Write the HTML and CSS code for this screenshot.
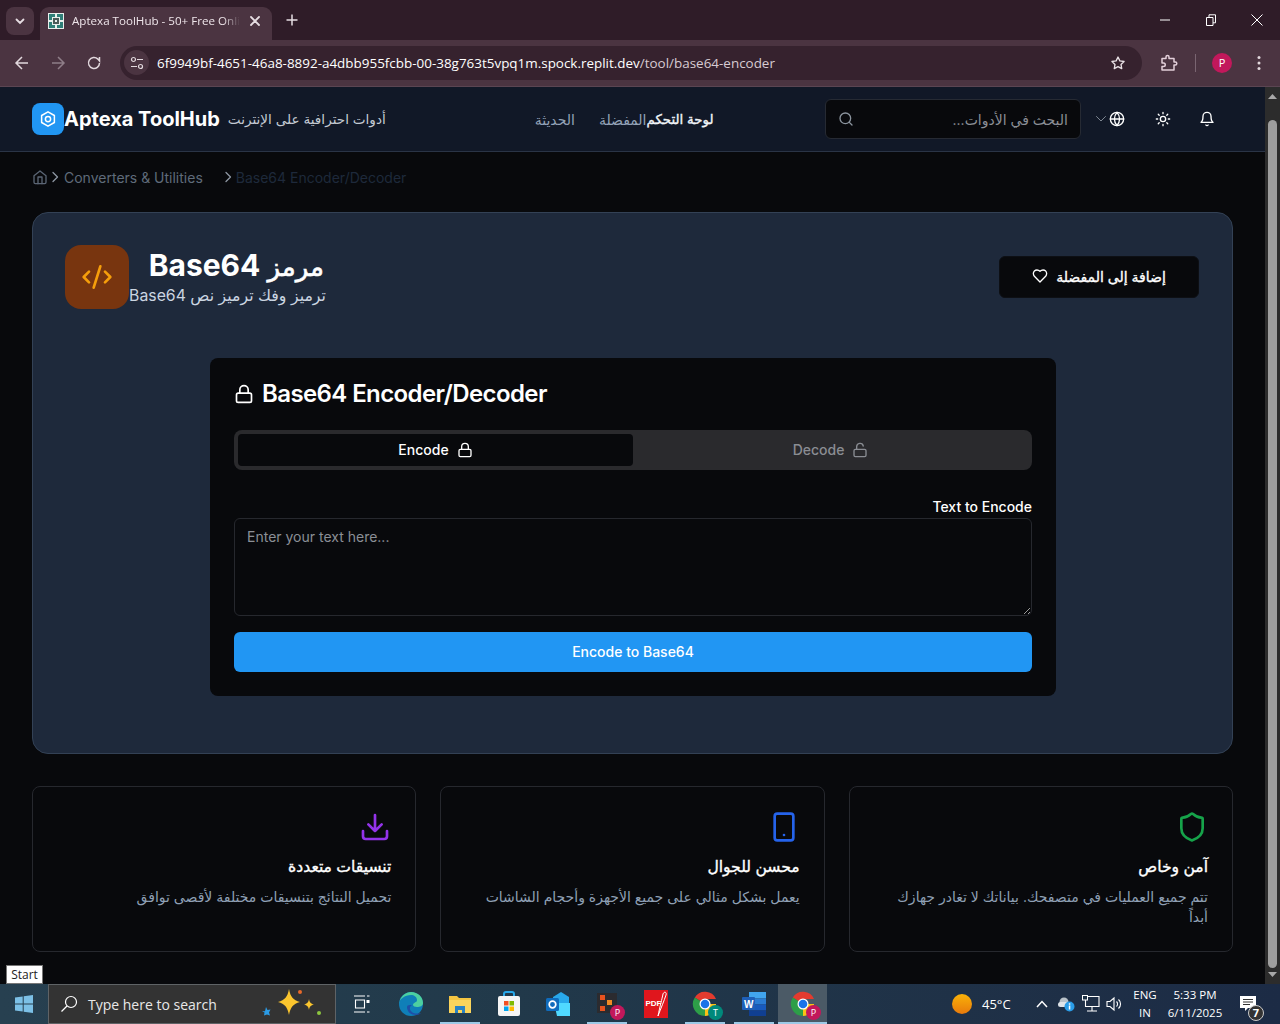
FILE: index.html
```html
<!DOCTYPE html>
<html lang="ar">
<head>
<meta charset="utf-8">
<title>Aptexa ToolHub</title>
<link rel="stylesheet" href="styles.css">
</head>
<body>
<div class="browser">
  <div class="tabbar">
    <div class="tab-search"><svg width="12" height="12" viewBox="0 0 12 12"><path d="M2.500 4.500 6 8l3.500-3.500" class="st-w2"/></svg></div>
    <div class="tab">
      <svg class="favicon" width="16" height="16" viewBox="0 0 16 16"><rect width="16" height="16" fill="#e8efec"/><path d="M1 1h6v3H4v3H1zM9 1h6v6h-3V4H9zM1 9h3v3h3v3H1zM12 9h3v6H9v-3h3z" fill="#2f7f78"/><path d="M5 5h6v6H5z" fill="#4a5a58"/><path d="M7 7h2v2H7z" fill="#e8efec"/></svg>
      <span class="tab-title">Aptexa ToolHub - 50+ Free Onli</span>
      <svg class="tab-close" width="10" height="10" viewBox="0 0 10 10"><path d="M1 1l8 8M9 1 1 9" class="st-w2"/></svg>
    </div>
    <svg class="newtab" width="12" height="12" viewBox="0 0 12 12"><path d="M6 .5v11M.5 6h11" class="st-w15"/></svg>
    <div class="win-ctrls">
      <svg width="10" height="10" viewBox="0 0 10 10"><path d="M0 5h10" class="st-w1"/></svg>
      <svg width="10" height="12" viewBox="0 0 10 12"><path d="M.5 3.500h6.500v8H.5zM3 3.500V.8h6.500v8H7" class="st-w1"/></svg>
      <svg class="win-close" width="12" height="12" viewBox="0 0 12 12"><path d="M.5.5l11 11M11.500.5l-11 11" class="st-w1"/></svg>
    </div>
  </div>
  <div class="toolbar">
    <svg class="tb-icon first" width="16" height="16" viewBox="0 0 16 16"><path d="M14 8H2.500M8 2 2 8l6 6" class="st-n15"/></svg>
    <svg class="tb-icon dim" width="16" height="16" viewBox="0 0 16 16"><path d="M2 8h11.500M8 2l6 6-6 6" class="st-d15"/></svg>
    <svg class="tb-icon" width="16" height="16" viewBox="0 0 16 16"><path d="M13.500 8a5.500 5.500 0 1 1-1.600-3.900L13.500 6V2" class="st-n15"/></svg>
    <div class="omnibox">
      <span class="site-info"><svg width="14" height="14" viewBox="0 0 14 14"><circle cx="3.500" cy="3.500" r="2" class="st-n12"/><path d="M7 3.500h6M1 10.500h6" class="st-n12"/><circle cx="10.500" cy="10.500" r="2" class="st-n12"/></svg></span>
      <span class="url">6f9949bf-4651-46a8-8892-a4dbb955fcbb-00-38g763t5vpq1m.spock.replit.dev<span class="url-path">/tool/base64-encoder</span></span>
      <svg class="star" width="16" height="16" viewBox="0 0 24 24"><path d="m12 3 2.800 5.800 6.300.9-4.600 4.400 1.100 6.300L12 17.400l-5.600 3 1.100-6.300L2.900 9.700l6.300-.9z" class="st-s"/></svg>
    </div>
    <svg class="ext" width="18" height="18" viewBox="0 0 18 18"><path d="M2 4.500h4V3a1.500 1.500 0 0 1 3 0v1.500h5V8h1.300a1.500 1.500 0 0 1 0 3H14v5H2v-3.500h1.500a1.500 1.500 0 0 0 0-3.500H2z" class="st-e"/></svg>
    <span class="tb-sep"></span>
    <span class="avatar">P</span>
    <svg class="dots" width="4" height="16" viewBox="0 0 4 16"><circle cx="2" cy="2.500" r="1.500"/><circle cx="2" cy="8" r="1.500"/><circle cx="2" cy="13.500" r="1.500"/></svg>
  </div>
</div>

<div class="viewport">
  <div class="page">
    <header class="site-header">
      <div class="brand">
        <span class="logo"><svg width="18" height="18" viewBox="0 0 24 24"><path d="M12 2.500 20.500 7.300v9.400L12 21.500 3.500 16.700V7.300z" class="st-lg"/><circle cx="12" cy="12" r="3.500" class="st-lg"/></svg></span>
        <span class="brand-name">Aptexa ToolHub</span>
        <span class="brand-sub" dir="rtl">أدوات احترافية على الإنترنت</span>
      </div>
      <nav class="nav" dir="rtl">
        <a class="nav-on">لوحة التحكم</a><a class="nav-a">المفضلة</a><a class="nav-b">الحديثة</a>
      </nav>
      <div class="header-right">
        <div class="search">
          <svg width="16" height="16" viewBox="0 0 24 24"><circle cx="11" cy="11" r="8" class="st-gr"/><path d="m21 21-4.300-4.300" class="st-gr"/></svg>
          <span class="search-ph" dir="rtl">البحث في الأدوات...</span>
        </div>
        <svg class="chev" width="12" height="12" viewBox="0 0 24 24"><path d="m3 7 9 9 9-9" class="st-gr"/></svg>
        <svg class="globe" width="16" height="16" viewBox="0 0 24 24"><circle cx="12" cy="12" r="10" class="st-wh"/><path d="M2 12h20M12 2a15 15 0 0 1 0 20a15 15 0 0 1 0-20" class="st-wh"/></svg>
        <svg class="sun" width="16" height="16" viewBox="0 0 24 24"><circle cx="12" cy="12" r="4" class="st-wh"/><path d="M12 2v2M12 20v2M4.900 4.900l1.400 1.400M17.700 17.700l1.400 1.400M2 12h2M20 12h2M6.300 17.700l-1.400 1.400M19.100 4.900l-1.400 1.400" class="st-wh"/></svg>
        <svg class="bell" width="16" height="16" viewBox="0 0 24 24"><path d="M6 8a6 6 0 0 1 12 0c0 7 3 9 3 9H3s3-2 3-9M10.300 21a2 2 0 0 0 3.400 0" class="st-wh"/></svg>
      </div>
    </header>

    <main class="main">
      <div class="crumbs">
        <svg width="16" height="16" viewBox="0 0 24 24"><path d="m3 10 9-7 9 7v10a2 2 0 0 1-2 2H5a2 2 0 0 1-2-2z" class="st-cr"/><path d="M9 22V12h6v10" class="st-cr"/></svg>
        <svg class="cr-sep" width="10" height="12" viewBox="0 0 10 12"><path d="m3 1.500 4.500 4.500L3 10.500" class="st-cr"/></svg>
        <span class="cr-link">Converters &amp; Utilities</span>
        <svg class="cr-sep2" width="10" height="12" viewBox="0 0 10 12"><path d="m3 1.500 4.500 4.500L3 10.500" class="st-cr"/></svg>
        <span class="cr-cur">Base64 Encoder/Decoder</span>
      </div>

      <section class="hero">
        <div class="hero-top">
          <div class="hero-id">
            <span class="hero-icon"><svg width="32" height="32" viewBox="0 0 24 24"><path d="m18 16 4-4-4-4M6 8l-4 4 4 4M14.500 4l-5 16" class="st-or"/></svg></span>
            <div class="hero-text" dir="rtl">
              <h1><span class="ar-h1">مرمز</span> Base64</h1>
              <p>ترميز وفك ترميز نص Base64</p>
            </div>
          </div>
          <button class="fav" dir="rtl">إضافة إلى المفضلة<svg width="16" height="16" viewBox="0 0 24 24"><path d="M19 14c1.500-1.500 3-3.200 3-5.500A5.500 5.500 0 0 0 16.500 3c-1.800 0-3 .5-4.500 2-1.500-1.500-2.700-2-4.500-2A5.500 5.500 0 0 0 2 8.500c0 2.300 1.500 4 3 5.500l7 7z" class="st-wh"/></svg></button>
        </div>

        <div class="tool">
          <h2><svg width="20" height="20" viewBox="0 0 24 24"><rect x="3" y="11" width="18" height="11" rx="2" class="st-wh"/><path d="M7 11V7a5 5 0 0 1 10 0v4" class="st-wh"/></svg>Base64 Encoder/Decoder</h2>
          <div class="tabs">
            <div class="seg seg-on">Encode<svg width="16" height="16" viewBox="0 0 24 24"><rect x="3" y="11" width="18" height="11" rx="2" class="st-wh"/><path d="M7 11V7a5 5 0 0 1 10 0v4" class="st-wh"/></svg></div>
            <div class="seg">Decode<svg width="16" height="16" viewBox="0 0 24 24"><rect x="3" y="11" width="18" height="11" rx="2" class="st-mu"/><path d="M7 11V7a5 5 0 0 1 9.900-1" class="st-mu"/></svg></div>
          </div>
          <label class="field-label" for="inp">Text to Encode</label>
          <textarea class="field" id="inp" placeholder="Enter your text here..."></textarea>
          <button class="go">Encode to Base64</button>
        </div>
      </section>

      <section class="features" dir="rtl">
        <article class="feat">
          <svg width="32" height="32" viewBox="0 0 24 24"><path d="M20 13c0 5-3.500 7.500-7.700 9a1 1 0 0 1-.7 0C7.500 20.500 4 18 4 13V6a1 1 0 0 1 1-1c2 0 4.500-1.200 6.200-2.700a1.200 1.200 0 0 1 1.600 0C14.500 3.800 17 5 19 5a1 1 0 0 1 1 1z" class="st-green"/></svg>
          <h3>آمن وخاص</h3>
          <p>تتم جميع العمليات في متصفحك. بياناتك لا تغادر جهازك<br>أبداً</p>
        </article>
        <article class="feat">
          <svg width="32" height="32" viewBox="0 0 24 24"><rect x="5" y="2" width="14" height="20" rx="2" class="st-blue"/><path d="M12 18h.01" class="st-blue"/></svg>
          <h3>محسن للجوال</h3>
          <p>يعمل بشكل مثالي على جميع الأجهزة وأحجام الشاشات</p>
        </article>
        <article class="feat">
          <svg width="32" height="32" viewBox="0 0 24 24"><path d="M21 15v4a2 2 0 0 1-2 2H5a2 2 0 0 1-2-2v-4M7 10l5 5 5-5M12 15V3" class="st-purple"/></svg>
          <h3>تنسيقات متعددة</h3>
          <p>تحميل النتائج بتنسيقات مختلفة لأقصى توافق</p>
        </article>
      </section>
    </main>
  </div>
  <div class="scrollbar">
    <svg width="9" height="5" viewBox="0 0 9 5"><path d="M4.500 0 9 5H0z"/></svg>
    <span class="thumb"></span>
    <svg width="9" height="5" viewBox="0 0 9 5"><path d="M0 0h9L4.500 5z"/></svg>
  </div>
</div>

<div class="start-tip">Start</div>

<footer class="taskbar">
  <div class="tk-start"><svg width="18" height="18" viewBox="0 0 18 18"><path d="M0 2.500 7.700 1.400v7.100H0zM8.700 1.300 18 0v8.500H8.700zM0 9.500h7.700v7.100L0 15.500zM8.700 9.500H18V18l-9.300-1.300z" fill="#7cc0e6"/></svg></div>
  <div class="tk-search">
    <svg width="18" height="18" viewBox="0 0 18 18"><circle cx="11" cy="7" r="5.500" class="st-tk"/><path d="M7 11 1.500 16.500" class="st-tk"/></svg>
    <span class="tk-ph">Type here to search</span>
    <svg class="sparkle" width="64" height="32" viewBox="0 0 64 32"><path d="M28 1c1.500 8 4 11 11 13-7 2-9.500 5-11 13-1.500-8-4-11-11-13 7-2 9.500-5 11-13z" fill="#fbc52e"/><path d="M48 11c.6 3.500 1.800 4.700 5 5.500-3.200.8-4.400 2-5 5.500-.6-3.500-1.800-4.700-5-5.500 3.200-.8 4.400-2 5-5.500z" fill="#fbc52e"/><path d="M5 19l1.500 3 3-.5-1.500 3 1 3-3-1-3 1 .5-3L1 23l3 .3z" fill="#2b9be6"/><circle cx="39" cy="4" r="2" fill="#e8692a"/><circle cx="58" cy="25" r="2" fill="#8dc63f"/></svg>
  </div>
  <div class="tk-apps">
    <span class="app"><svg width="17" height="18" viewBox="0 0 17 18"><path d="M1 1h11M1 17h11M2.500 5h9v8h-9z" class="st-tkw"/><rect x="13.500" y="5" width="3" height="3" fill="#fff"/><path d="M14 1h2.500M14 17h2.500" class="st-tkw"/></svg></span>
    <span class="app"><svg width="26" height="26" viewBox="0 0 26 26"><circle cx="13" cy="13" r="12" fill="#0f7fb8"/><path d="M1 13C2 5 8 1 13 1c7 0 12 5 12 11 0 3-3 4-6 4-2 0-4-1-4-2 0-3 4-2 4-5 0-3-3-5-6-5-6 0-12 4-12 9z" fill="#4dd0a0"/><path d="M9 16c0 5 4 8 9 8 2 0 4-1 5-2-3 1-8 1-10-2-2-2-1-5 1-6-3 0-5 0-5 2z" fill="#1f4fa8"/></svg></span>
    <span class="app app-under"><svg width="24" height="22" viewBox="0 0 24 22"><path d="M1 3h8l2 2h12v15H1z" fill="#f4c542"/><rect x="1" y="7" width="22" height="13" fill="#fbd55c"/><path d="M7 13h10v7h-3v-3h-4v3H7z" fill="#2a83c4"/></svg></span>
    <span class="app"><svg width="24" height="26" viewBox="0 0 24 26"><path d="M7 5V3a2 2 0 0 1 2-2h6a2 2 0 0 1 2 2v2" fill="none" stroke="#28a8ea" stroke-width="2"/><rect x="1" y="5" width="22" height="20" rx="2" fill="#f5f5f5"/><rect x="7" y="10" width="4.500" height="4.500" fill="#f25022"/><rect x="12.500" y="10" width="4.500" height="4.500" fill="#7fba00"/><rect x="7" y="15.500" width="4.500" height="4.500" fill="#00a4ef"/><rect x="12.500" y="15.500" width="4.500" height="4.500" fill="#ffb900"/></svg></span>
    <span class="app"><svg width="24" height="24" viewBox="0 0 24 24"><path d="M7 5 15 0l8 5v14H7z" fill="#28a8ea"/><path d="M8 11h16v13H11z" fill="#50d9ff"/><rect y="6" width="13" height="13" rx="1.500" fill="#0f6cbd"/><circle cx="6.500" cy="12.500" r="3.300" fill="none" stroke="#fff" stroke-width="1.700"/></svg></span>
    <span class="app app-under badge-host"><svg width="22" height="22" viewBox="0 0 22 22"><rect width="20" height="20" x="1" fill="#2b2b2f"/><rect x="4" y="2" width="5" height="5" fill="#e8531f"/><rect x="4" y="13" width="5" height="5" fill="#e8531f"/><rect x="11" y="7" width="5" height="5" fill="#f08a24"/></svg><b class="badge pink">P</b></span>
    <span class="app"><svg width="24" height="28" viewBox="0 0 24 28"><rect width="24" height="28" fill="#e0161d"/><path d="M14 26c3-8 6-15 8-21 1-3-2-4-3-1-1 5-3 12-5 22z" fill="none" stroke="#fff" stroke-width="1"/><text x="1.500" y="16" class="pdf-t">PDF</text></svg></span>
    <span class="app app-under badge-host"><svg class="chrome" width="26" height="26" viewBox="0 0 26 26"><path d="M13 13 2.800 6.500A12 12 0 0 1 24 8H13z" fill="#e33b2e"/><path d="M13 13H24A12 12 0 0 1 13 25z" fill="#fbc116"/><path d="M13 13v12A12 12 0 0 1 2.800 6.500z" fill="#2d9e48"/><circle cx="13" cy="13" r="5.500" fill="#fff"/><circle cx="13" cy="13" r="4.300" fill="#1a73e8"/></svg><b class="badge teal">T</b></span>
    <span class="app app-under"><svg width="24" height="26" viewBox="0 0 24 26"><rect x="7" y="1" width="17" height="6.500" fill="#41a5ee"/><rect x="7" y="7.500" width="17" height="6" fill="#2b7cd3"/><rect x="7" y="13.500" width="17" height="6" fill="#185abd"/><rect x="7" y="19.500" width="17" height="5.500" fill="#103f91"/><rect y="6" width="13" height="13" rx="1" fill="#1e5fb8"/><text x="2" y="16.500" class="word-t">W</text></svg></span>
    <span class="app app-on badge-host"><svg class="chrome" width="26" height="26" viewBox="0 0 26 26"><path d="M13 13 2.800 6.500A12 12 0 0 1 24 8H13z" fill="#e33b2e"/><path d="M13 13H24A12 12 0 0 1 13 25z" fill="#fbc116"/><path d="M13 13v12A12 12 0 0 1 2.800 6.500z" fill="#2d9e48"/><circle cx="13" cy="13" r="5.500" fill="#fff"/><circle cx="13" cy="13" r="4.300" fill="#1a73e8"/></svg><b class="badge pink">P</b></span>
  </div>
  <div class="tray">
    <span class="weather"></span>
    <span class="temp">45°C</span>
    <svg class="tr-chev" width="12" height="8" viewBox="0 0 12 8"><path d="M1 7l5-5.500L11 7" class="st-tr"/></svg>
    <svg class="tr-cloud" width="18" height="16" viewBox="0 0 18 16"><circle cx="7" cy="6" r="4.500" fill="#b9c2c9"/><rect x="1" y="6" width="10" height="5" rx="2.500" fill="#dfe4e8"/><circle cx="12.500" cy="10.500" r="5" fill="#2a9de8"/><rect x="11.800" y="9.500" width="1.500" height="4" fill="#fff"/><rect x="11.800" y="7.300" width="1.500" height="1.400" fill="#fff"/></svg>
    <svg class="tr-net" width="18" height="18" viewBox="0 0 18 18"><path d="M3.500 1.500h13.500v10H3.500zM10 11.500v4M5 16h10" class="st-tr1"/><rect x=".5" y=".5" width="5" height="4.500" fill="#1e3246" stroke="#fff"/></svg>
    <svg class="tr-vol" width="18" height="16" viewBox="0 0 18 16"><path d="M1 5.500h3L8 2v12l-4-3.500H1z" class="st-tr1"/><path d="M10.500 5.500a3.500 3.500 0 0 1 0 5M12.500 3.500a6 6 0 0 1 0 9" class="st-tr1"/></svg>
    <span class="lang"><span>ENG</span><span>IN</span></span>
    <span class="clock"><span>5:33 PM</span><span>6/11/2025</span></span>
    <span class="notif">
      <svg width="18" height="18" viewBox="0 0 18 18"><path d="M1 1h16v12H9l-3 3v-3H1z" fill="#fff"/><path d="M4 4.500h10M4 7h10M4 9.500h7" stroke="#333" fill="none"/></svg>
      <b class="notif-n">7</b>
    </span>
  </div>
</footer>
</body>
</html>
```
FILE: styles.css
```css
* { box-sizing: border-box; }
html, body { margin: 0; height: 100%; overflow: hidden; }
body {
  width: 1280px; height: 1024px; display: flex; flex-direction: column;
  background: #08090c; font-family: Inter, "DejaVu Sans", sans-serif; color: #fff;
  position: relative;
}
svg { flex: none; display: block; fill: none; }
h1, h2, h3, p { margin: 0; }

/* shared strokes */
.st-w2 { fill: none; stroke: #e6dde2; stroke-width: 1.800; stroke-linecap: round; }
.st-w15 { fill: none; stroke: #e6dde2; stroke-width: 1.500; }
.st-w1 { fill: none; stroke: #fff; stroke-width: 1; }
.st-n15 { fill: none; stroke: #e2d8dd; stroke-width: 1.500; }
.st-d15 { fill: none; stroke: #8f7e88; stroke-width: 1.500; }
.st-n12 { fill: none; stroke: #e2d8dd; stroke-width: 1.200; }
.st-s { fill: none; stroke: #e9e1e5; stroke-width: 2; stroke-linejoin: round; }
.st-e { fill: none; stroke: #e3cfd9; stroke-width: 1.500; stroke-linejoin: round; }
.st-lg { fill: none; stroke: #fff; stroke-width: 2; stroke-linejoin: round; }
.st-gr { fill: none; stroke: #8b949e; stroke-width: 2; stroke-linecap: round; stroke-linejoin: round; }
.st-wh { fill: none; stroke: #fff; stroke-width: 2; stroke-linecap: round; stroke-linejoin: round; }
.st-mu { fill: none; stroke: #8a8d93; stroke-width: 2; stroke-linecap: round; stroke-linejoin: round; }
.st-cr { fill: none; stroke: #5b6675; stroke-width: 2; stroke-linecap: round; stroke-linejoin: round; }
.cr-sep path, .cr-sep2 path { stroke: #8d96a3; stroke-width: 1.300; }
.st-or { fill: none; stroke: #f59e0b; stroke-width: 2; stroke-linecap: round; stroke-linejoin: round; }
.st-green { fill: none; stroke: #16a34a; stroke-width: 2; stroke-linecap: round; stroke-linejoin: round; }
.st-blue { fill: none; stroke: #2563eb; stroke-width: 2; stroke-linecap: round; stroke-linejoin: round; }
.st-purple { fill: none; stroke: #9333ea; stroke-width: 2; stroke-linecap: round; stroke-linejoin: round; }
.st-tk { fill: none; stroke: #fff; stroke-width: 1.200; }
.st-tkw { fill: none; stroke: #fff; stroke-width: 1.100; }
.st-tr { fill: none; stroke: #fff; stroke-width: 1.500; }
.st-tr1 { fill: none; stroke: #fff; stroke-width: 1.100; }

/* browser chrome */
.browser { flex: none; font-family: "Open Sans", "Noto Sans", sans-serif; }
.tabbar { height: 40px; background: #2f1c28; display: flex; align-items: flex-start; padding: 7px 0 0 6px; }
.tab-search { width: 28px; height: 28px; border-radius: 8px; background: #4b3441; display: flex; align-items: center; justify-content: center; }
.tab {
  width: 232px; height: 33px; margin-left: 6px; background: #4b3441; border-radius: 9px 9px 0 0;
  display: flex; align-items: center; padding: 0 0 6px 8px; font-size: 11.600px; color: #eee5ea;
}
.favicon { margin-right: 8px; }
.tab-title { width: 168px; white-space: nowrap; -webkit-mask-image: linear-gradient(90deg, #000 90%, transparent); mask-image: linear-gradient(90deg, #000 90%, transparent); }
.tab-close { margin-left: 10px; }
.newtab { margin: 7px 0 0 14px; }
.win-ctrls { margin-left: auto; display: flex; align-items: center; gap: 36px; padding: 0 17px 0 0; height: 26px; }
.win-close { margin-left: -1px; }
.toolbar { height: 47px; background: #4b3441; display: flex; align-items: center; padding-bottom: 1px; border-bottom: 1px solid #5b4552; }
.tb-icon { margin-left: 20px; }
.tb-icon.first { margin-left: 14px; }
.omnibox {
  width: 1022px; height: 34px; margin-left: 18px; border-radius: 17px; background: #36222e;
  display: flex; align-items: center; font-size: 13.450px; padding: 0 16px 0 4px; color: #fff;
}
.site-info { width: 25px; height: 25px; border-radius: 50%; background: #4b3441; display: flex; align-items: center; justify-content: center; margin-right: 8px; }
.url { white-space: nowrap; }
.url-path { color: #d7cbd2; }
.star { margin-left: auto; }
.ext { margin-left: 18px; }
.tb-sep { width: 1px; height: 18px; background: #7a6571; margin-left: 17px; }
.avatar { width: 20px; height: 20px; border-radius: 50%; background: #c2185b; font-size: 11px; display: flex; align-items: center; justify-content: center; margin-left: 16px; }
.dots { fill: #e2d8dd; margin-left: 25px; }

/* page */
.viewport { flex: 1; min-height: 0; display: flex; }
.page { flex: 1; min-width: 0; background: #08090c; }
.scrollbar { width: 15px; background: #2c2c2c; display: flex; flex-direction: column; align-items: center; padding: 7px 0; }
.scrollbar svg { fill: #a8a8a8; }
.thumb { width: 9px; flex: 1; border-radius: 5px; background: #9e9e9e; margin: 21px 0 4px; }

.site-header { height: 65px; background: #111827; border-bottom: 1px solid #2a3446; display: flex; align-items: center; padding: 0 0 0 32px; }
.brand { display: flex; align-items: center; }
.logo { width: 32px; height: 32px; border-radius: 8px; background: #2196f3; display: flex; align-items: center; justify-content: center; }
.brand-name { font-size: 20px; font-weight: 700; margin-right: 8px; white-space: nowrap; }
.brand-sub { font-size: 13.600px; color: #c4cad3; white-space: nowrap; }
.nav { display: flex; margin-left: 149px; font-size: 14px; color: #94a3b8; white-space: nowrap; }
.nav-on { color: #f1f5f9; font-size: 13.400px; -webkit-text-stroke: .35px #f1f5f9; }
.nav-b { margin-right: 24px; }
.header-right { margin-left: auto; display: flex; align-items: center; }
.search { width: 256px; height: 40px; background: #08090c; border: 1px solid #262a33; border-radius: 6px; display: flex; align-items: center; padding: 0 12px; justify-content: space-between; }
.search-ph { font-size: 14px; color: #8b8f96; }
.chev { margin-left: 14px; }
.chev path { stroke-width: 1.800; }
.globe { margin-left: 2px; }
.sun { margin-left: 30px; }
.bell { margin: 0 50px 0 28px; }

.main { padding: 0 32px; }
.crumbs { height: 60px; display: flex; align-items: center; padding-bottom: 10px; font-size: 14px; color: #5f6b7a; }
.cr-sep { margin: 0 2px; }
.cr-link { margin-left: 2px; }
.cr-sep2 { margin: 0 2px 0 20px; }
.cr-cur { color: #1e293b; margin-left: 1px; }

.hero { height: 542px; background: #1e293b; border: 1px solid #334155; border-radius: 16px; padding: 32px 33px 0 32px; }
.hero-top { display: flex; justify-content: space-between; align-items: center; height: 64px; }
.hero-id { display: flex; align-items: center; }
.hero-icon { width: 64px; height: 64px; border-radius: 16px; background: #78350f; display: flex; align-items: center; justify-content: center; }
.hero-text { width: 197px; }
.hero-text h1 { font-size: 30px; line-height: 36px; font-weight: 700; padding-right: 2px; white-space: nowrap; }
.ar-h1 { font-weight: 400; font-size: 26px; -webkit-text-stroke: .6px #fff; }
.hero-text p { font-size: 15.800px; line-height: 24px; color: #cbd5e1; margin-top: -1px; white-space: nowrap; }
.fav {
  width: 200px; height: 42px; padding: 0 0 2px; background: #08090c; border: 1px solid #0d0f14; border-radius: 6px; color: #fff;
  font: 400 14px Inter, "DejaVu Sans", sans-serif; -webkit-text-stroke: .35px #fff; display: flex; align-items: center; justify-content: center; gap: 8px;
}

.tool { width: 846px; height: 338px; margin: 49px 0 0 145px; background: #08090c; border-radius: 8px; padding: 24px; }
.tool h2 { display: flex; align-items: center; gap: 8px; font-size: 24px; line-height: 24px; font-weight: 600; letter-spacing: -.025em; height: 24px; margin-bottom: 24px; }
.tabs { height: 40px; background: #2a2a2d; border-radius: 8px; padding: 4px; display: flex; }
.seg { flex: 1; display: flex; align-items: center; justify-content: center; gap: 8px; padding-bottom: 1px; font-size: 14px; font-weight: 500; color: #8a8d93; border-radius: 4px; }
.seg-on { background: #08090c; color: #fff; }
.field-label { display: block; text-align: right; font-size: 14px; font-weight: 500; line-height: 14px; margin-top: 30px; }
.field {
  display: block; width: 100%; height: 98px; margin-top: 4px; background: #08090c; border: 1px solid #26282e; border-radius: 6px;
  color: #fff; font: 14px/20px Inter, "DejaVu Sans", sans-serif; padding: 8px 12px;
  outline: none;
}
.field::placeholder { color: #8b8f96; }
.go { display: block; width: 100%; height: 40px; margin-top: 16px; padding: 0 0 2px; background: #2196f3; border: 0; border-radius: 6px; color: #fff; font: 500 14px Inter, sans-serif; }

.features { display: grid; grid-template-columns: repeat(3, 1fr); gap: 24px; margin-top: 32px; }
.feat { height: 166px; background: #08090c; border: 1px solid #26282e; border-radius: 8px; padding: 24px; }
.feat h3 { font-size: 15.600px; line-height: 24px; font-weight: 400; -webkit-text-stroke: .35px #fff; margin-top: 12px; }
.feat p { font-size: 14px; line-height: 20px; color: #8fa0b5; margin-top: 8px; }

/* overlay tooltip */
.start-tip { position: absolute; left: 6px; top: 965px; width: 37px; height: 19px; background: #fff; border: 1px solid #777; color: #222; font: 12px/17px "Open Sans", sans-serif; text-align: center; z-index: 2; }

/* taskbar */
.taskbar {
  flex: none; height: 40px; display: flex; align-items: stretch; color: #fff;
  background: linear-gradient(90deg, #274050 0%, #21394a 40%, #1f3147 75%, #1c2b45 100%);
  font-family: "Open Sans", "Noto Sans", sans-serif;
}
.tk-start { width: 48px; display: flex; align-items: center; justify-content: center; }
.tk-search { width: 288px; background: #333; border: 1px solid #5f6366; display: flex; align-items: center; padding: 0 0 0 11px; }
.tk-ph { font-size: 14px; margin-left: 10px; color: #e8e8e8; white-space: nowrap; }
.sparkle { margin-left: auto; margin-right: 10px; }
.tk-apps { display: flex; margin-left: 1px; }
.app { position: relative; width: 49px; display: flex; align-items: center; justify-content: center; }
.app-under::after, .app-on::after { content: ""; position: absolute; left: 5px; right: 4px; bottom: 0; height: 2px; background: #9cc9e6; }
.app-on { background: #4b5a66; }
.app-on::after { left: 0; right: 0; }
.badge { position: absolute; right: 6px; bottom: 4px; width: 15px; height: 15px; border-radius: 50%; font: 9px/15px "Open Sans", sans-serif; text-align: center; color: #fff; }
.pink { background: #c2185b; }
.teal { background: #00897b; }
.pdf-t { font: 700 8px "Liberation Sans", sans-serif; fill: #fff; }
.word-t { font: 700 10px "Liberation Sans", sans-serif; fill: #fff; }
.tray { margin-left: auto; display: flex; align-items: center; font-size: 13px; }
.weather { width: 20px; height: 20px; border-radius: 50%; background: linear-gradient(#f9b208, #e87a0c); }
.temp { margin-left: 10px; width: 30px; white-space: nowrap; font-size: 13px; }
.tr-chev { margin-left: 24px; }
.tr-cloud { margin-left: 9px; }
.tr-net { margin-left: 7px; }
.tr-vol { margin-left: 6px; }
.lang, .clock { display: flex; flex-direction: column; align-items: center; font-size: 11.500px; line-height: 18px; white-space: nowrap; }
.lang { width: 30px; margin-left: 6px; }
.clock { width: 62px; margin-left: 4px; }
.notif { position: relative; width: 32px; margin: 0 16px 0 6px; height: 40px; display: flex; align-items: center; justify-content: center; }
.notif-n { position: absolute; right: 0; bottom: 3px; width: 16px; height: 16px; border-radius: 50%; background: #333; border: 1px solid #ccc; font: 700 11px/14px "Open Sans", sans-serif; text-align: center; }
```
